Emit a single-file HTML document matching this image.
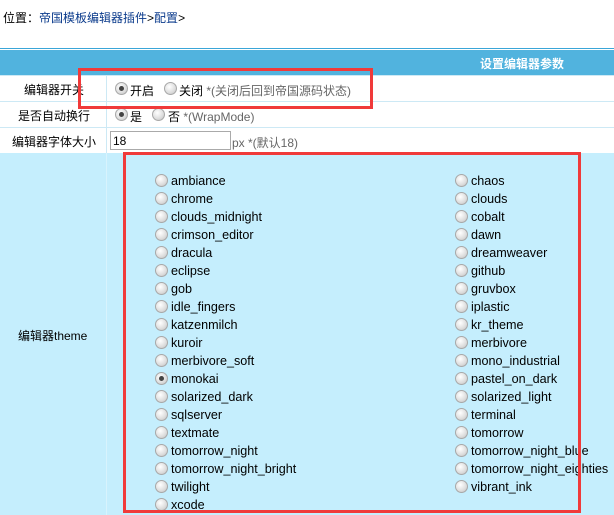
<!DOCTYPE html>
<html><head><meta charset="utf-8"><style>
*{margin:0;padding:0;box-sizing:border-box}
body{width:614px;height:515px;overflow:hidden;background:#fff;font-family:"Liberation Sans","Noto Sans CJK SC",sans-serif;font-size:12px;color:#000;position:relative}
.a{position:absolute;white-space:nowrap}
.t{font-size:12.6px}
.r{position:absolute;width:13px;height:13px;border-radius:50%;background:radial-gradient(circle at 40% 35%,#fff,#ddd 60%,#bbb);border:1px solid #a8a8a8}
.r.on::after{content:"";position:absolute;left:3px;top:3px;width:5px;height:5px;border-radius:50%;background:#444}
.g{color:#666}
</style></head><body>
<div class="a" style="left:3px;top:9px;font-size:12px">位置：<span style="color:#0b3b8c">帝国模板编辑器插件</span>&gt;<span style="color:#0b3b8c">配置</span>&gt;</div>
<div class="a" style="left:0;top:48px;width:614px;height:1px;background:#3aa6d8"></div>
<div class="a" style="left:0;top:50px;width:614px;height:25px;background:#51b3de"></div>
<div class="a" style="left:480px;top:55px;color:#fff;font-weight:bold">设置编辑器参数</div>
<div class="a" style="left:0;top:75px;width:614px;height:1px;background:#cde9f5"></div>
<div class="a" style="left:0;top:101px;width:614px;height:1px;background:#cde9f5"></div>
<div class="a" style="left:0;top:127px;width:614px;height:1px;background:#cde9f5"></div>
<div class="a" style="left:0;top:153px;width:614px;height:362px;background:#c5eefd"></div>
<div class="a" style="left:106px;top:75px;width:1px;height:78px;background:#cde9f5"></div>
<div class="a" style="left:106px;top:153px;width:1px;height:362px;background:#d8f3fd"></div>
<div class="a" style="left:24px;top:81px">编辑器开关</div>
<div class="a" style="left:18px;top:107px">是否自动换行</div>
<div class="a" style="left:12px;top:133px">编辑器字体大小</div>
<div class="a" style="left:18px;top:327px">编辑器theme</div>
<div class="r on" style="left:115px;top:82px"></div><div class="a" style="left:130px;top:82px">开启</div>
<div class="r" style="left:164px;top:82px"></div><div class="a" style="left:179px;top:82px">关闭 <span class="g">*(关闭后回到帝国源码状态)</span></div>
<div class="r on" style="left:115px;top:108px"></div><div class="a" style="left:130px;top:108px">是</div>
<div class="r" style="left:152px;top:108px"></div><div class="a" style="left:168px;top:108px">否 <span class="g">*(WrapMode)</span></div>
<div class="a" style="left:110px;top:131px;width:121px;height:19px;border:1px solid #aaa;background:#fff;padding:2px 2px;line-height:14px">18</div>
<div class="a" style="left:232px;top:134px"><span class="g">px *(默认18)</span></div>
<div id="L"></div>
<div class="a" style="left:78px;top:68px;width:295px;height:41px;border:3px solid #f03a3a"></div>
<div class="a" style="left:123px;top:152px;width:458px;height:361px;border:3px solid #f03a3a"></div>
<script>
var L=["ambiance","chrome","clouds_midnight","crimson_editor","dracula","eclipse","gob","idle_fingers","katzenmilch","kuroir","merbivore_soft","monokai","solarized_dark","sqlserver","textmate","tomorrow_night","tomorrow_night_bright","twilight","xcode"];
var R=["chaos","clouds","cobalt","dawn","dreamweaver","github","gruvbox","iplastic","kr_theme","merbivore","mono_industrial","pastel_on_dark","solarized_light","terminal","tomorrow","tomorrow_night_blue","tomorrow_night_eighties","vibrant_ink"];
var h="";
function add(a,x){a.forEach(function(n,i){var y=174+i*18;h+='<div class="r'+(n=="monokai"?' on':'')+'" style="left:'+x+'px;top:'+y+'px"></div><div class="a t" style="left:'+(x+16)+'px;top:'+(y)+'px">'+n+'</div>';});}
add(L,155);add(R,455);
document.getElementById("L").innerHTML=h;
</script>
</body></html>
